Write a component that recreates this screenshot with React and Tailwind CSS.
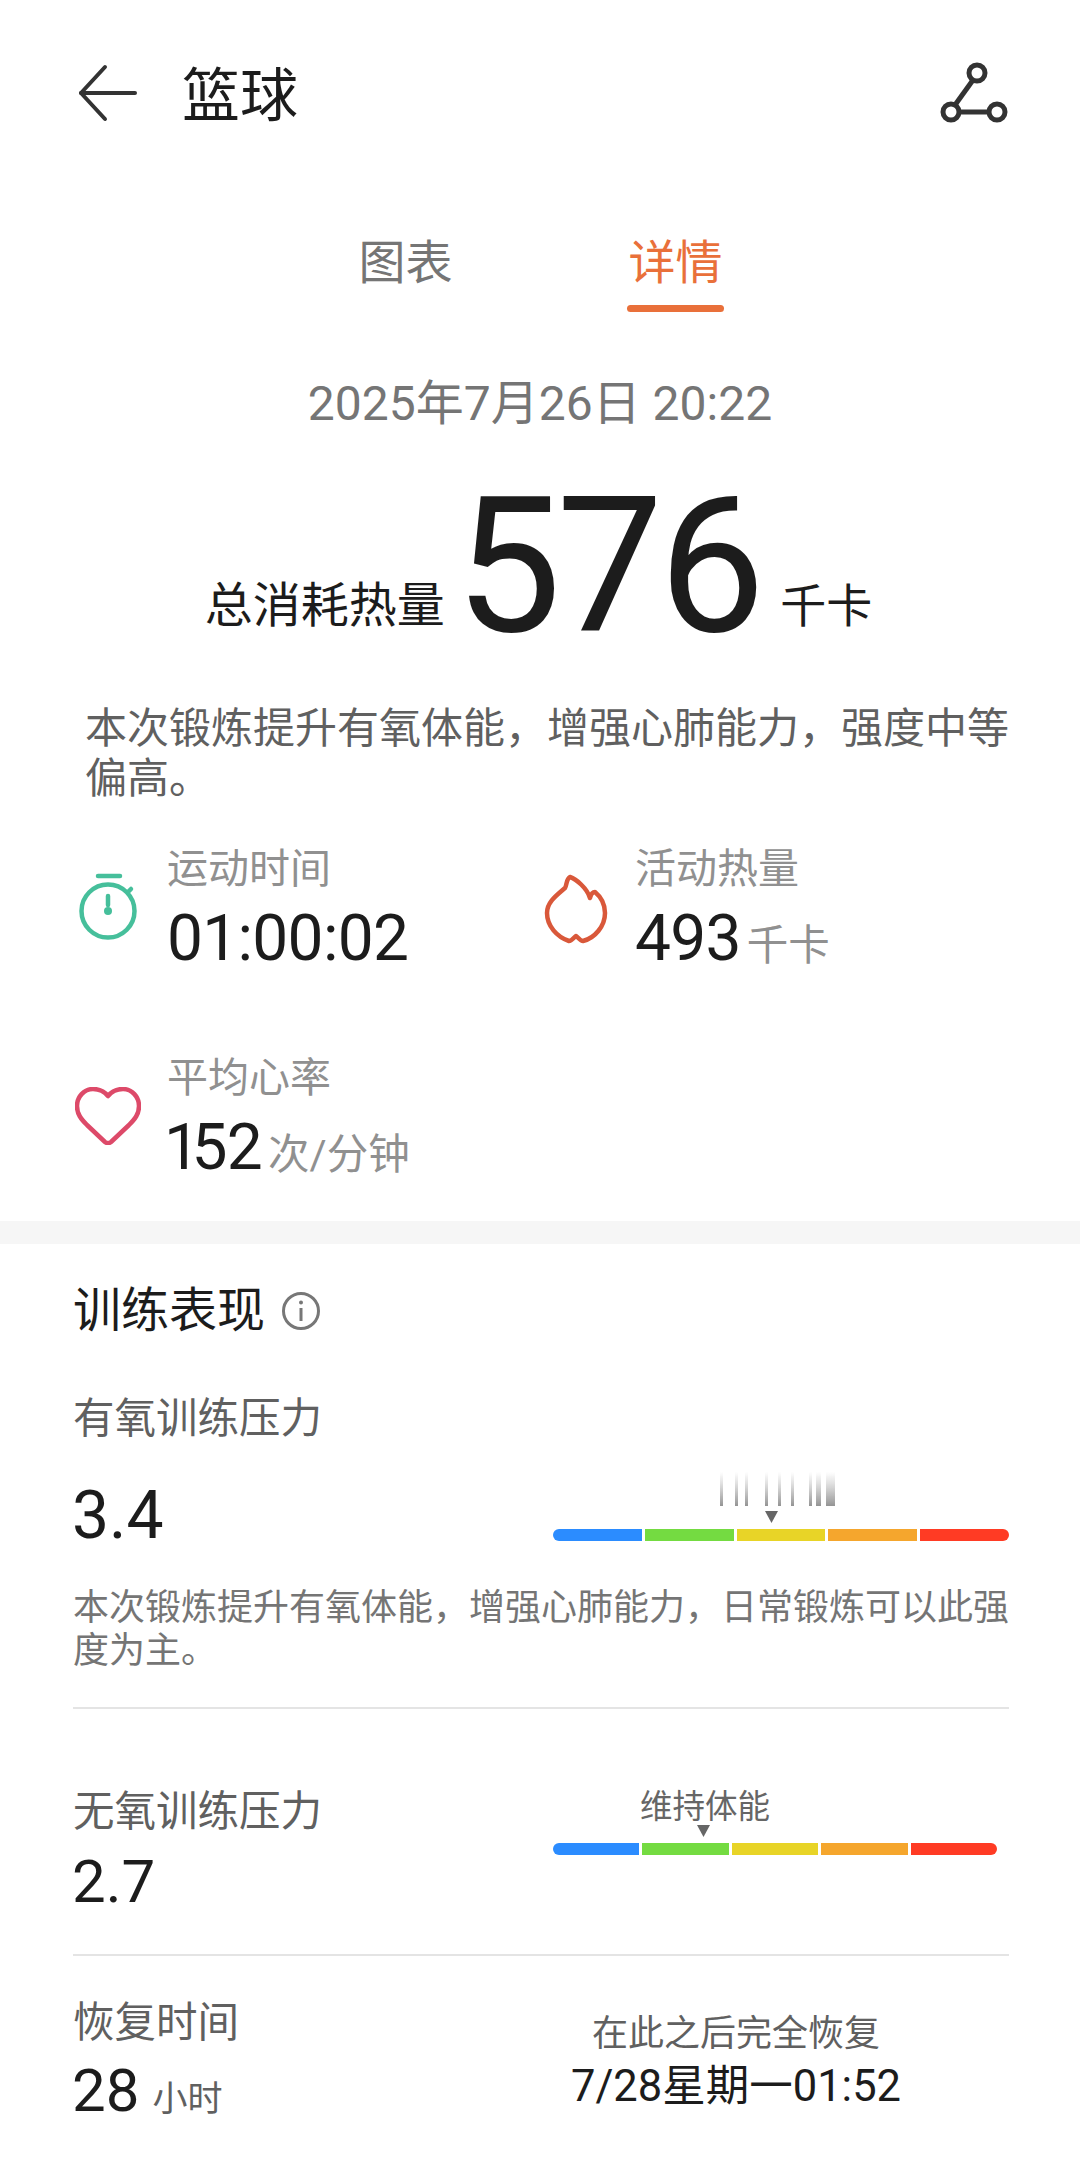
const font = { fontFamily: '"Roboto", "Noto Sans CJK SC", sans-serif' };

function Back_Icon() {
  return (
    <svg width="60" height="58" viewBox="0 0 60 58" fill="none" stroke="#333333" strokeWidth="4" strokeLinecap="round" strokeLinejoin="round">
      <path d="M27 3 L3 29 L27 55" />
      <path d="M3 29 H57" />
    </svg>
  );
}

function Share_Icon() {
  return (
    <svg width="68" height="62" viewBox="0 0 68 62" fill="none" stroke="#333333" strokeWidth="5">
      <circle cx="37" cy="11" r="8" />
      <circle cx="11" cy="50" r="8" />
      <circle cx="57" cy="50" r="8" />
      <path d="M33 18 L15 43" />
      <path d="M19 50 H49" />
    </svg>
  );
}

function Timer_Icon() {
  return (
    <svg width="66" height="68" viewBox="0 0 66 68" fill="none" stroke="#46bf9b" strokeWidth="4.5" strokeLinecap="round">
      <path d="M23 3 H45" />
      <circle cx="33" cy="38" r="26.5" />
      <path d="M53 19 L56 16" />
      <path d="M33 23 V32" />
      <circle cx="33" cy="38" r="4" fill="#46bf9b" stroke="none" />
    </svg>
  );
}

function Flame_Icon() {
  return (
    <svg width="66" height="70" viewBox="-4 -2 66 70" fill="none" stroke="#d9583a" strokeWidth="4.5" strokeLinejoin="round" strokeLinecap="round">
      <path d="M23 1 C29 3 40 12 43 22 C44 18 46 16 48 16 C54 21 58 29 58 37 C58 50 48 62 36 65 C33 65 31 61 29 60 C27 61 25 65 22 65 C10 61 0 50 0 37 C0 26 10 19 18 12 C20 9 19 3 23 1 Z" />
    </svg>
  );
}

function Heart_Icon() {
  return (
    <svg width="66" height="58" viewBox="0 0 66 58" fill="none" stroke="#dd4a69" strokeWidth="4.5" strokeLinejoin="round">
      <path d="M33 9 C29 4 24 2 18 2 C9 2 2 10 2 19 C2 27 6 32 12 38 L30 55 C32 56.5 34 56.5 36 55 L54 38 C60 32 64 27 64 19 C64 10 57 2 48 2 C42 2 37 4 33 9 Z" />
    </svg>
  );
}

function Info_Icon() {
  return (
    <svg width="38" height="38" viewBox="0 0 38 38" fill="none" stroke="#777777" strokeWidth="3">
      <circle cx="19" cy="19" r="17.5" />
      <path d="M19 16 V29" />
      <circle cx="19" cy="10.5" r="2" fill="#777777" stroke="none" />
    </svg>
  );
}

function Blur_Ticks() {
  // smudged label above the first bar
  const ticks = [[0, 3], [15, 3], [25, 3], [45, 3], [58, 3], [71, 3], [89, 3], [96, 5], [106, 9]];
  return (
    <svg width="116" height="34" viewBox="0 0 116 34" className="blur-[0.6px]">
      <defs>
        <linearGradient id="tick" x1="0" y1="0" x2="0" y2="1">
          <stop offset="0" stopColor="#888888" stopOpacity="0" />
          <stop offset="1" stopColor="#666666" stopOpacity="0.7" />
        </linearGradient>
      </defs>
      {ticks.map(([x, w]) => (
        <rect key={x} x={x} y="0" width={w} height="34" fill="url(#tick)" />
      ))}
    </svg>
  );
}

function Triangle() {
  return (
    <svg width="13" height="12" viewBox="0 0 13 12" className="block">
      <path d="M0 0 H13 L6.5 12 Z" fill="#666666" />
    </svg>
  );
}

function Level_Bar() {
  return (
    <div className="flex gap-[3px] h-[12px] w-full">
      <div className="flex-1 bg-[#2b8cff] rounded-l-full" />
      <div className="flex-1 bg-[#74db41]" />
      <div className="flex-1 bg-[#e8d427]" />
      <div className="flex-1 bg-[#f5a62d]" />
      <div className="flex-1 bg-[#ff3b24] rounded-r-full" />
    </div>
  );
}

function Stat({ icon, icon_class, label, value, unit }) {
  return (
    <div className="flex items-center h-[136px]">
      <div className={`w-[66px] flex justify-center shrink-0 ${icon_class}`}>{icon}</div>
      <div className="ml-[26px]">
        <div className="text-[41px] leading-[56px] text-[#909090]">{label}</div>
        <div className="flex items-baseline leading-[80px] h-[80px] mt-[2px]">
          <span className="text-[64px] text-[#1c1c1c] tracking-[-0.7px]">{value}</span>
          {unit && <span className="text-[41.5px] text-[#909090] ml-[6px]">{unit}</span>}
        </div>
      </div>
    </div>
  );
}

export default function App() {
  return (
    <div className="w-[1080px] h-[2175px] overflow-hidden bg-white" style={font}>
      {/* header */}
      <div className="flex items-center justify-between pt-[58px] h-[128px] pl-[78px] pr-[72px]">
        <div className="flex items-center">
          <Back_Icon />
          <span className="ml-[44px] pt-[5px] text-[58px] leading-[70px] text-[#1c1c1c]">篮球</span>
        </div>
        <Share_Icon />
      </div>

      {/* tabs */}
      <div className="flex justify-center gap-[173px] ml-[1px] mt-[105px]">
        <div className="w-[97px] text-center text-[47px] leading-[60px] text-[#757575]">图表</div>
        <div className="w-[97px] text-center">
          <div className="text-[47px] leading-[60px] text-[#e9703a]">详情</div>
          <div className="h-[7px] rounded-full bg-[#e9703a] mt-[12px]" />
        </div>
      </div>

      <div className="text-center text-[48px] leading-[60px] text-[#757575] mt-[62px]">2025年7月26日 20:22</div>

      {/* total calories */}
      <div className="flex items-end justify-center mt-[37px] h-[190px]">
        <span className="text-[48px] leading-[60px] text-[#1c1c1c] mb-[25px] -ml-[3px]">总消耗热量</span>
        <span className="text-[190px] leading-[190px] tracking-[-5px] text-[#1c1c1c] ml-[10px] mr-[20px]">576</span>
        <span className="text-[46px] leading-[60px] text-[#1c1c1c] mb-[25px]">千卡</span>
      </div>

      <p className="text-[42px] leading-[50px] text-[#606060] ml-[85px] w-[930px] mt-[43px]">
        本次锻炼提升有氧体能，增强心肺能力，强度中等偏高。
      </p>

      {/* stats */}
      <div className="grid grid-cols-[468px_1fr] gap-y-[73px] pl-[75px] mt-[38px]">
        <Stat icon={<Timer_Icon />} icon_class="-mt-[6px]" label="运动时间" value="01:00:02" />
        <Stat icon={<Flame_Icon />} icon_class="-mt-[2px]" label="活动热量" value="493" unit="千卡" />
        <Stat
          icon={<Heart_Icon />}
          icon_class="-mt-[6px]"
          label="平均心率"
          value={<><span className="-ml-[3px] tracking-[-8.5px]">1</span>52</>}
          unit="次/分钟"
        />
      </div>

      <div className="h-[23px] bg-[#f6f6f6] mt-[34px]" />

      {/* training */}
      <div className="pl-[73px] pr-[71px]">
        <div className="flex items-center mt-[37px] h-[60px]">
          <span className="text-[48px] text-[#1c1c1c]">训练表现</span>
          <span className="ml-[17px] flex"><Info_Icon /></span>
        </div>

        <div className="text-[41.5px] leading-[56px] text-[#606060] mt-[50px]">有氧训练压力</div>
        <div className="flex items-end justify-between mt-[25px]">
          <div className="text-[66px] leading-[80px] text-[#1c1c1c] -ml-[1px] mb-[3px]">3.4</div>
          <div className="w-[456px] mb-[18px]">
            <div className="ml-[167px] flex"><Blur_Ticks /></div>
            <div className="ml-[212px] mt-[5px] mb-[6px]"><Triangle /></div>
            <Level_Bar />
          </div>
        </div>
        <p className="text-[36px] leading-[43px] text-[#757575] mt-[28px]">
          本次锻炼提升有氧体能，增强心肺能力，日常锻炼可以此强度为主。
        </p>
        <div className="h-[2px] bg-[#e4e4e4] mt-[34px]" />

        <div className="flex justify-between mt-[75px]">
          <div>
            <div className="text-[41.5px] leading-[56px] text-[#606060]">无氧训练压力</div>
            <div className="text-[60px] leading-[80px] text-[#1c1c1c] mt-[2px] -ml-[1px]">2.7</div>
          </div>
          <div className="w-[456px] pr-[12px] mt-[5px]">
            <div className="ml-[87px] text-[32.5px] leading-[36px] text-[#666666]">维持体能</div>
            <div className="ml-[144px] mb-[6px]"><Triangle /></div>
            <Level_Bar />
          </div>
        </div>
        <div className="h-[2px] bg-[#e4e4e4] mt-[32px]" />

        <div className="flex justify-between mt-[39px]">
          <div>
            <div className="text-[41.5px] leading-[56px] text-[#606060]">恢复时间</div>
            <div className="flex items-baseline leading-[80px] -ml-[1px]">
              <span className="text-[60px] text-[#1c1c1c]">28</span>
              <span className="text-[35px] text-[#606060] ml-[13px]">小时</span>
            </div>
          </div>
          <div className="w-[470px] text-center mr-[38px] mt-[14px]">
            <div className="text-[36px] leading-[50px] text-[#606060]">在此之后完全恢复</div>
            <div className="text-[43.5px] leading-[56px] text-[#1c1c1c]">7/28星期一01:52</div>
          </div>
        </div>
      </div>
    </div>
  );
}
